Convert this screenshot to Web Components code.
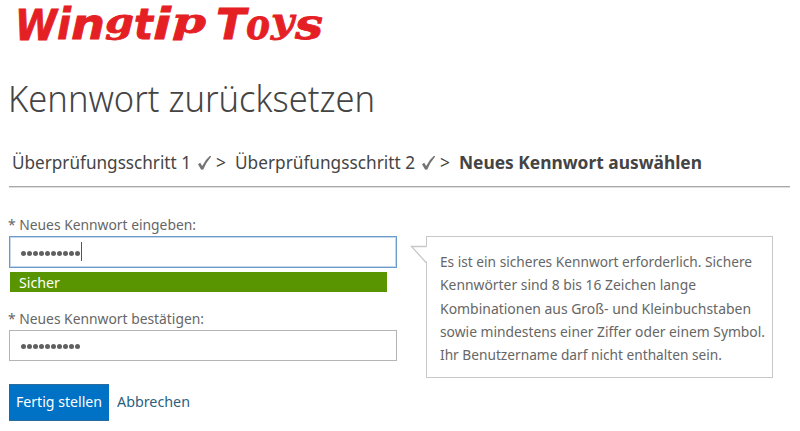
<!DOCTYPE html>
<html lang="de">
<head>
<meta charset="utf-8">
<title>Kennwort zurücksetzen</title>
<style>
body{margin:0;background:#fff}
</style>
</head>
<body>
<reset-page></reset-page>
<script>
function define(name, html, ready){
  const t=document.createElement('template');
  t.innerHTML=html;
  customElements.define(name, class extends HTMLElement{
    connectedCallback(){
      if(this.shadowRoot) return;
      this.attachShadow({mode:'open'}).append(t.content.cloneNode(true));
      if(ready) ready(this,this.shadowRoot);
    }
  });
}

/* One line of text, set to an exact measure. */
define('fit-text',`<style>
:host{display:block;white-space:nowrap;flex:none}
span{display:inline-block;transform-origin:0 50%}
</style><span><slot></slot></span>`,(el,root)=>{
  const s=root.querySelector('span'), w=+el.getAttribute('w');
  el.style.width=w+'px';
  const natural=s.getBoundingClientRect().width;
  if(natural) s.style.transform='scaleX('+w/natural+')';
});

/* Wordmark: lowercase letters with tails are smaller and raised so all sit on one baseline. */
define('brand-logo',`<style>
:host{display:block;height:73px;box-sizing:border-box;color:#e52024}
svg{display:block;overflow:visible}
text{font:italic 700 43px "DejaVu Sans",sans-serif;fill:currentColor;stroke:currentColor;stroke-width:.8}
.sf{font-family:"DejaVu Serif",serif}
.tail{font-size:34px}
.s{font-size:43px}
</style><svg width="330" height="50"><text><tspan x="15" y="39.5" textLength="42" lengthAdjust="spacingAndGlyphs">W</tspan><tspan x="57" y="39" textLength="14" lengthAdjust="spacingAndGlyphs">i</tspan><tspan x="71" y="39" textLength="34" lengthAdjust="spacingAndGlyphs">n</tspan><tspan class="sf tail" x="105" y="33" textLength="29" lengthAdjust="spacingAndGlyphs">g</tspan><tspan x="134" y="39" textLength="19" lengthAdjust="spacingAndGlyphs">t</tspan><tspan x="153" y="39" textLength="18" lengthAdjust="spacingAndGlyphs">i</tspan><tspan class="sf tail" x="172" y="33" textLength="34" lengthAdjust="spacingAndGlyphs">p</tspan></text><text><tspan x="216" y="39" textLength="30" lengthAdjust="spacingAndGlyphs">T</tspan><tspan class="sf s" x="246" y="39" textLength="24" lengthAdjust="spacingAndGlyphs">o</tspan><tspan class="sf tail" x="271" y="33" textLength="23" lengthAdjust="spacingAndGlyphs">y</tspan><tspan class="sf s" x="295" y="39" textLength="28" lengthAdjust="spacingAndGlyphs">s</tspan></text></svg>`);

define('check-mark',`<style>
:host{display:block;flex:none;width:15px;height:16px}
svg{display:block}
</style><svg width="15" height="16" viewBox="0 0 15 16"><path d="M1 9.2 3.2 7.8 5.2 11Q8.4 4.6 13 .8L14.2 1.5Q9.4 7 6.3 14.6L4.2 14.7Z" fill="#747474"/></svg>`);

define('step-trail',`<style>
:host{display:flex;height:40px;box-sizing:border-box;line-height:30px;font-size:18px;color:#444;margin:0 10px 0 9px;padding-left:3px;border-bottom:1px solid #a9a9a9;box-shadow:0 1px #dedede}
check-mark{margin:8px 4px 0 6px}
.gt{margin-right:9px}
b{font-weight:700}
</style>
<fit-text w="179">Überprüfungsschritt 1</fit-text><check-mark></check-mark><fit-text class="gt" w="10">&gt;</fit-text>
<fit-text w="180">Überprüfungsschritt 2</fit-text><check-mark></check-mark><fit-text class="gt" w="10">&gt;</fit-text>
<fit-text w="243"><b>Neues Kennwort auswählen</b></fit-text>`);

define('password-field',`<style>
:host{display:block;color:#666}
::slotted(fit-text){margin-left:-1px}
.box{display:flex;align-items:center;box-sizing:border-box;width:388px;height:31px;border:1px solid #b4b4b4;padding-left:11px;margin-top:2px;background:#fff}
:host([focused]) .box{height:32px;border:1px solid #6b9bcb;box-shadow:inset 0 0 0 1px #c5d8ea}
i{width:5px;height:5px;border-radius:50%;background:#606060;margin-right:1px;margin-top:2px}
.caret{width:1px;height:19px;background:#555;margin-top:-1px;display:none}
:host([focused]) .caret{display:block}
</style><slot></slot><div class="box"></div>`,(el,root)=>{
  root.querySelector('.box').innerHTML='<i></i>'.repeat(10)+'<span class="caret"></span>';
});

define('strength-bar',`<style>
:host{display:block;box-sizing:border-box;width:377px;height:20px;margin:4px 0 0 1px;padding-left:9px;background:#589500;color:#fff;line-height:20px}
</style><slot></slot>`);

define('hint-bubble',`<style>
:host{display:block;position:relative;box-sizing:border-box;width:347px;height:142px;border:1px solid #c8c8c8;padding:13px 0 0 13px;color:#666;line-height:23.3px}
svg{position:absolute;left:-17px;top:8px}
</style><svg width="18" height="20" viewBox="0 0 18 20"><path d="M18 1.5H1.5L18 18Z" fill="#fff"/><path d="M16.5 1.5H1.5L16.5 18" fill="none" stroke="#c8c8c8" stroke-width="1.3"/></svg><slot></slot>`);

define('action-row',`<style>
:host{display:flex;line-height:35px;margin-top:23px;color:#2a5f80}
.primary{box-sizing:border-box;width:100px;height:37px;background:#0072c6;border:1px solid #2c6c9d;border-width:1px 0 1px 0;color:#fff;padding-left:7px;margin-right:8px}
.primary fit-text{margin-top:-1px}
</style><div class="primary"><fit-text w="86">Fertig stellen</fit-text></div><fit-text w="73">Abbrechen</fit-text>`);

define('reset-page',`<style>
:host{display:block;width:800px;height:431px;overflow:hidden;background:#fff;font:15px/20px "Noto Sans","Open Sans",sans-serif;color:#666}
h1{margin:0;height:74px;padding-left:8px;font:300 36.5px/51px "Noto Sans","Open Sans",sans-serif;color:#444}
main{display:grid;grid-template-columns:389px 347px;column-gap:28px;padding:27px 0 0 9px}
aside{padding-top:22px}
.second{margin-top:16px}
</style>
<brand-logo></brand-logo>
<h1><fit-text w="367">Kennwort zurücksetzen</fit-text></h1>
<step-trail></step-trail>
<main>
<section>
<password-field focused><fit-text w="188">* Neues Kennwort eingeben:</fit-text></password-field>
<strength-bar><fit-text w="41">Sicher</fit-text></strength-bar>
<password-field class="second"><fit-text w="196">* Neues Kennwort bestätigen:</fit-text></password-field>
<action-row></action-row>
</section>
<aside><hint-bubble>
<fit-text w="312">Es ist ein sicheres Kennwort erforderlich. Sichere</fit-text>
<fit-text w="256">Kennwörter sind 8 bis 16 Zeichen lange</fit-text>
<fit-text w="311">Kombinationen aus Groß- und Kleinbuchstaben</fit-text>
<fit-text w="325">sowie mindestens einer Ziffer oder einem Symbol.</fit-text>
<fit-text w="282">Ihr Benutzername darf nicht enthalten sein.</fit-text>
</hint-bubble></aside>
</main>`);
</script>
</body>
</html>
